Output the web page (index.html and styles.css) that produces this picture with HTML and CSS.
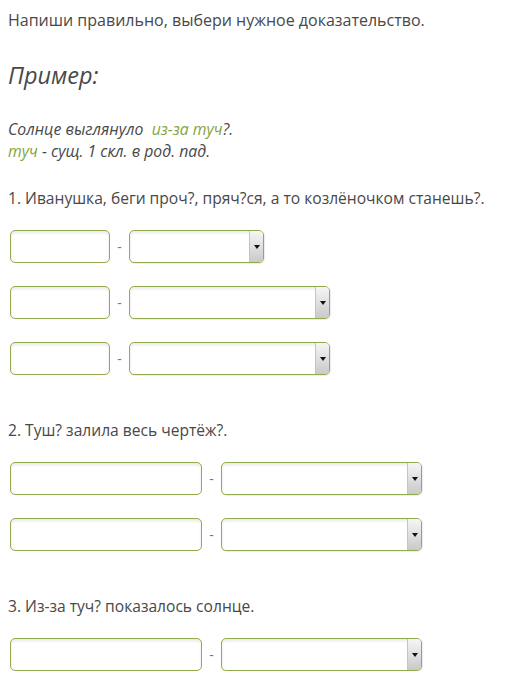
FILE: index.html
```html
<!DOCTYPE html>
<html lang="ru">
  <head>
    <meta charset="UTF-8" />
    <title>Задание</title>
    <link rel="stylesheet" href="styles.css">
  </head>
  <body>
    <div class="container">

      <p class="task-title">Напиши правильно, выбери нужное доказательство.</p>

      <h2 class="example-title">Пример:</h2>

      <p class="example">
        Солнце выглянуло &nbsp;<span class="hl">из-за туч</span>?.<br>
        <span class="hl">туч</span> - сущ. 1 скл. в род. пад.
      </p>

      <div class="task task-1">
        <p class="question">1. Иванушка, беги проч?, пряч?ся, а то козлёночком станешь?.</p>
        <div class="rows">
          <div class="row">
            <input class="field field-short" type="text">
            <span class="dash">-</span>
            <div class="select select-short"><span class="select-value"></span><span class="select-btn"></span></div>
          </div>
          <div class="row">
            <input class="field field-short" type="text">
            <span class="dash">-</span>
            <div class="select"><span class="select-value"></span><span class="select-btn"></span></div>
          </div>
          <div class="row">
            <input class="field field-short" type="text">
            <span class="dash">-</span>
            <div class="select"><span class="select-value"></span><span class="select-btn"></span></div>
          </div>
        </div>
      </div>

      <div class="task">
        <p class="question">2. Туш? залила весь чертёж?.</p>
        <div class="rows">
          <div class="row">
            <input class="field" type="text">
            <span class="dash">-</span>
            <div class="select"><span class="select-value"></span><span class="select-btn"></span></div>
          </div>
          <div class="row">
            <input class="field" type="text">
            <span class="dash">-</span>
            <div class="select"><span class="select-value"></span><span class="select-btn"></span></div>
          </div>
        </div>
      </div>

      <div class="task">
        <p class="question">3. Из-за туч? показалось солнце.</p>
        <div class="rows">
          <div class="row">
            <input class="field" type="text">
            <span class="dash">-</span>
            <div class="select"><span class="select-value"></span><span class="select-btn"></span></div>
          </div>
        </div>
      </div>

    </div>
  </body>
</html>
```

FILE: styles.css
```css
* {
  box-sizing: border-box;
}
body {
  margin: 0;
  padding: 0;
  background: #fff;
  color: #484848;
  font-family: 'Open Sans', 'Noto Sans', sans-serif;
}
p, h2 {
  margin: 0;
}
.container {
  padding: 10px 8px 0;
}
.task-title {
  font-size: 16px;
  line-height: 20px;
}
.example-title {
  margin-top: 30px;
  font-size: 23.5px;
  line-height: 30px;
  font-style: italic;
  font-weight: 400;
}
.example {
  margin-top: 28px;
  font-size: 15.8px;
  line-height: 22px;
  font-style: italic;
}
.hl {
  color: #86a442;
}
.task {
  margin-top: 45px;
}
.task-1 {
  margin-top: 26px;
}
.question {
  font-size: 15.6px;
  line-height: 20px;
}
.rows {
  display: flex;
  flex-direction: column;
  gap: 23px;
  margin-top: 22px;
  padding-left: 2px;
}
.row {
  display: flex;
  align-items: center;
  height: 33px;
}
.field {
  width: 192px;
  height: 33px;
  margin: 0;
  padding: 0 6px;
  border: 1px solid #93ab4f;
  border-radius: 5px;
  background: #fff;
  box-shadow: inset 0 2px 3px rgba(0, 0, 0, 0.09);
  font: inherit;
  outline: none;
}
.field-short {
  width: 100px;
}
.dash {
  width: 19px;
  text-align: center;
  color: #777;
  font-size: 14px;
}
.select {
  display: flex;
  width: 201px;
  height: 33px;
  border: 1px solid #93ab4f;
  border-radius: 5px;
  overflow: hidden;
  background: #fff;
  box-shadow: inset 0 2px 3px rgba(0, 0, 0, 0.09), 1px 1px 1px rgba(0, 0, 0, 0.08);
}
.select-short {
  width: 135px;
}
.select-value {
  flex: 1;
}
.select-btn {
  display: flex;
  align-items: center;
  justify-content: center;
  width: 14px;
  border-left: 1px solid #c4c4c4;
  background: linear-gradient(#f6f6f6, #c9c9c9);
}
.select-btn::after {
  content: '';
  border-top: 4px solid #111;
  border-left: 3.5px solid transparent;
  border-right: 3.5px solid transparent;
}
```
